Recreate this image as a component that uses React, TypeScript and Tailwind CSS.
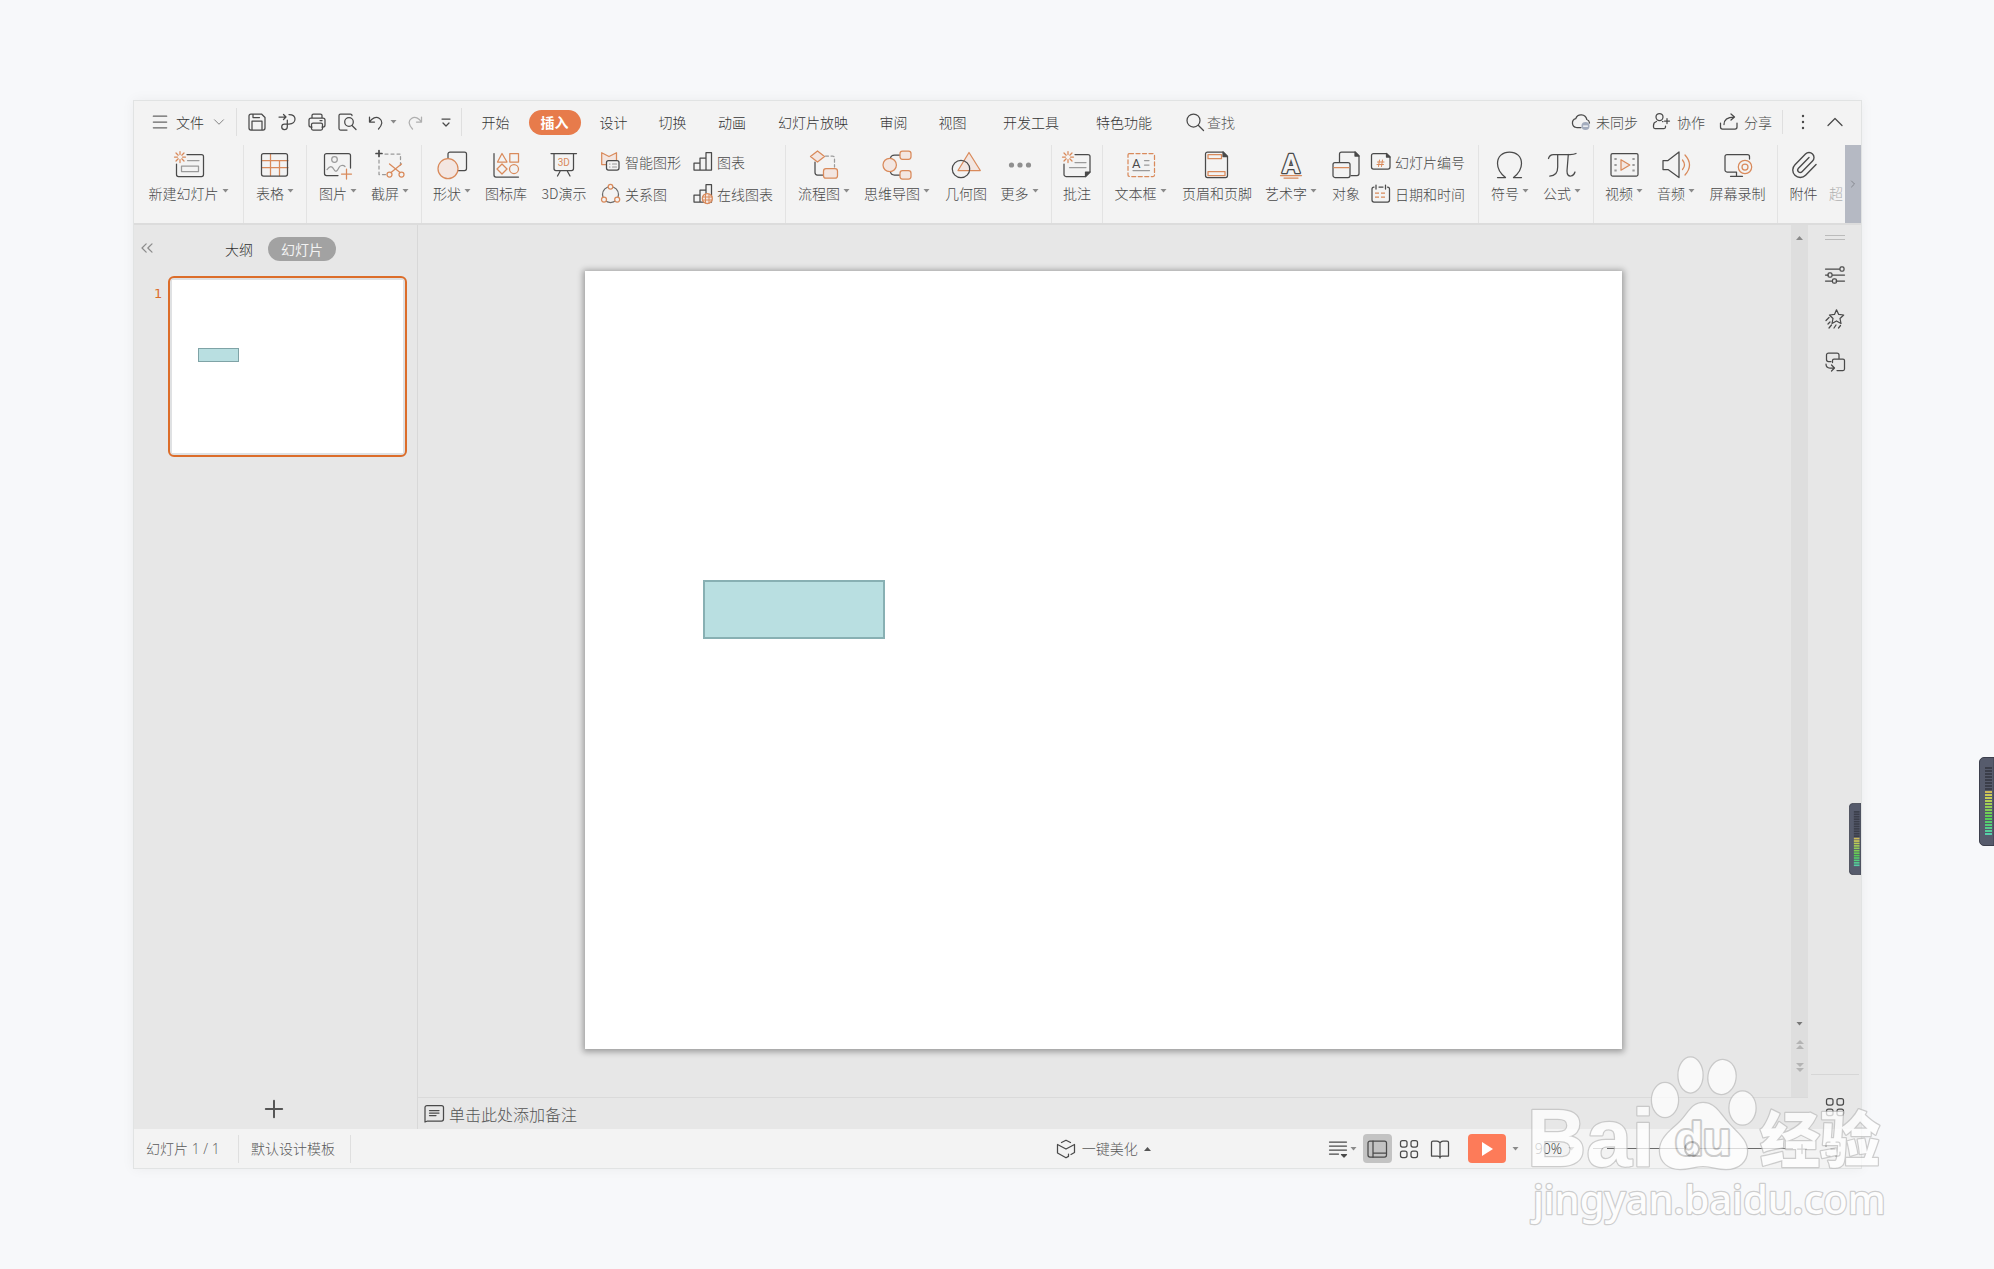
import type { ReactNode } from 'react'
import { ChevronDown, ChevronUp, ChevronsLeft, ChevronRight, Menu, Paperclip, Plus } from 'lucide-react'

const INK = '#4a4a4a'
const ORANGE = '#d98a5b'
const TINT = '#f3e6e1'
const GRAY = '#9a9a9a'

function Icon({ size = 30, children }: { size?: number; children: ReactNode }) {
  return (
    <svg
      width={size}
      height={size}
      viewBox={`0 0 ${size} ${size}`}
      fill="none"
      stroke={INK}
      strokeWidth="1.250"
      strokeLinecap="round"
      strokeLinejoin="round"
      className="shrink-0 overflow-visible"
      aria-hidden="true"
    >
      {children}
    </svg>
  )
}

function Spark() {
  return <path stroke={ORANGE} d="M6 1.5v3M6 9.5v3M.5 7h3M8.5 7h3M2 3l2.200 2.200M7.800 8.800L10 11M10 3L7.800 5.200M4.200 8.800L2 11" />
}

function Caret({ up = false, className = 'text-[#8a8a8a]' }: { up?: boolean; className?: string }) {
  return (
    <svg width="7" height="4" viewBox="0 0 7 4" className={`shrink-0 ${className}`} aria-hidden="true">
      <path fill="currentColor" d={up ? 'M0 4L3.500 0L7 4z' : 'M.5 0h6L3.500 3.500z'} />
    </svg>
  )
}

function Separator({ className = 'h-7' }: { className?: string }) {
  return <div className={`w-px shrink-0 bg-[#dfdfdf] ${className}`} />
}

const icons = {
  newSlide: (
    <Icon>
      <Spark />
      <path d="M13 4.500h14.500a2 2 0 0 1 2 2v18a2 2 0 0 1-2 2H4.500a2 2 0 0 1-2-2V14" />
      <path stroke={GRAY} d="M13.500 10.500H25M7.500 16h17v5.500h-17z" />
    </Icon>
  ),
  table: (
    <Icon>
      <path stroke={ORANGE} d="M2 10.500h26M2 17.500h26M10.500 4v21.500M19.500 10.500v15" />
      <rect x="1.500" y="3.500" width="26" height="22.500" rx="2" />
    </Icon>
  ),
  picture: (
    <Icon>
      <path d="M15 25.500H3.500a2 2 0 0 1-2-2v-18a2 2 0 0 1 2-2h22a2 2 0 0 1 2 2V18" />
      <circle cx="11.500" cy="9.500" r="2.800" stroke={GRAY} />
      <path stroke={GRAY} d="M4 19.500c3-4 5-4 7 0s4 0 5-2 4-3 6-1" />
      <path stroke={ORANGE} d="M23.500 19v10M18.500 24h10" />
    </Icon>
  ),
  capture: (
    <Icon>
      <path strokeWidth="1.700" d="M4 .5v6M1 3.500h6" />
      <path stroke={GRAY} strokeDasharray="3 3" d="M10 4h15.500v11M4 10v14.500h7" />
      <path stroke={ORANGE} d="M14.500 14l10.500 8.500M26.500 14L16 22.500" />
      <circle cx="14.500" cy="24.500" r="2.500" stroke={ORANGE} />
      <circle cx="26.500" cy="24.500" r="2.500" stroke={ORANGE} />
    </Icon>
  ),
  shape: (
    <Icon>
      <rect x="11" y="2" width="18.500" height="18.500" rx="2" />
      <circle cx="11" cy="18.700" r="10" stroke={ORANGE} fill={TINT} />
    </Icon>
  ),
  iconLibrary: (
    <Icon>
      <path d="M3 3.500V25a2 2 0 0 0 2 2h22.500" />
      <path stroke={ORANGE} d="M11 3.500l5 8.500H6.500zM18.800 3.500h8.700V12h-8.700zM11 14l5 5-5 5-5-5z" />
      <circle cx="23" cy="19" r="4.500" stroke={ORANGE} />
    </Icon>
  ),
  show3d: (
    <Icon>
      <path d="M2 3.500h25.500M5 3.500v15a2 2 0 0 0 2 2h15.500a2 2 0 0 0 2-2v-15M11 21.500l-2.500 4.500M18.500 21.500L21 26" />
      <text x="14.800" y="15.500" textAnchor="middle" fontSize="10" fontWeight="400" fill={ORANGE} stroke="none" fontFamily="Roboto, sans-serif">
        3D
      </text>
    </Icon>
  ),
  smartArt: (
    <Icon size={20}>
      <path stroke={ORANGE} fill={TINT} d="M5 12.500H.7V.7L8 4.500 15.500.7V8" />
      <rect x="5.500" y="8.500" width="12.500" height="9.500" rx="2" fill="#f3f3f3" />
      <path stroke={GRAY} strokeWidth="1.200" d="M8.500 12h.5M11.500 12h4M8.500 15h.5M11.500 15h4" />
    </Icon>
  ),
  relation: (
    <Icon size={20}>
      <circle cx="9.500" cy="10.500" r="8" stroke="#6a6a6a" />
      <g stroke={ORANGE} fill="#f3f3f3">
        <circle cx="9.500" cy="2.700" r="2.300" />
        <circle cx="3" cy="15.500" r="2.500" />
        <circle cx="16.200" cy="15.500" r="2.500" />
      </g>
    </Icon>
  ),
  chart: (
    <Icon size={20}>
      <path d="M1 11h6v7H1zM7 6h6v12H7zM13 .7h5.500V18H13z" />
    </Icon>
  ),
  onlineChart: (
    <Icon size={20}>
      <path d="M1 11h6v7H1zM7 6h6v12H7zM13 .7h5.500V18H13z" />
      <circle cx="14.300" cy="14.500" r="5" stroke={ORANGE} fill={TINT} />
      <path stroke={ORANGE} strokeWidth="1" d="M9.500 13h9.500M9.500 16h9.500M12.500 10v9M16 10v9" />
    </Icon>
  ),
  flow: (
    <Icon>
      <path d="M6 12v10.500A2.500 2.500 0 0 0 8.500 25H14" />
      <path stroke={GRAY} strokeDasharray="3 2.500" d="M16.500 6h7a2 2 0 0 1 2 2v9" />
      <path stroke={ORANGE} fill={TINT} d="M8.500 1l7 5.500-7 5.500-7-5.500z" />
      <rect x="14.500" y="18.700" width="14" height="9.500" rx="2.500" stroke={ORANGE} fill={TINT} />
    </Icon>
  ),
  mind: (
    <Icon>
      <path d="M18 5h-5.500Q9 5 8.500 8M18 25h-5.500Q9 25 8.500 22" />
      <g stroke={ORANGE} fill={TINT}>
        <circle cx="7.700" cy="15" r="6.700" />
        <rect x="18" y="1" width="11" height="8.300" rx="2.500" />
        <rect x="18" y="20.700" width="11" height="8.300" rx="2.500" />
      </g>
    </Icon>
  ),
  geometry: (
    <Icon>
      <path stroke={ORANGE} fill={TINT} d="M18 2.500l11.300 18H7z" />
      <circle cx="10" cy="19" r="8.700" />
    </Icon>
  ),
  more: (
    <Icon>
      <g fill="#8f8f8f" stroke="none">
        <circle cx="6.500" cy="15" r="2.600" />
        <circle cx="15" cy="15" r="2.600" />
        <circle cx="23.500" cy="15" r="2.600" />
      </g>
    </Icon>
  ),
  comment: (
    <Icon>
      <Spark />
      <path d="M13 4.500h13a2 2 0 0 1 2 2V22l-4.500 4.500H4a2 2 0 0 1-2-2V14" />
      <path fill={INK} d="M28 22h-4.500v4.500z" />
      <path stroke={GRAY} d="M13 12.500h11M7.500 17.500H24" />
    </Icon>
  ),
  textBox: (
    <Icon>
      <rect x="2" y="3.500" width="26.500" height="23" rx="1.500" stroke={ORANGE} strokeDasharray="4 2.500" />
      <text x="6" y="17.500" fontSize="13" fontWeight="400" fill={INK} stroke="none" fontFamily="Roboto, sans-serif">
        A
      </text>
      <path stroke={GRAY} d="M18.500 10.500H23M18.500 15H23M7 20.500h16.500" />
    </Icon>
  ),
  header: (
    <Icon>
      <path d="M21 2H5.500a2 2 0 0 0-2 2v21.500a2 2 0 0 0 2 2h18a2 2 0 0 0 2-2V6.500z" />
      <path fill={INK} d="M21 2v4.500h4.500z" />
      <path stroke={ORANGE} d="M6 4.700h13.500v4H6zM6 21.500h17v4H6z" />
    </Icon>
  ),
  wordArt: (
    <Icon>
      <text
        x="15"
        y="22.500"
        textAnchor="middle"
        fontSize="26"
        fontWeight="700"
        fill="#f3f3f3"
        strokeWidth="2.600"
        paintOrder="stroke"
        fontFamily="Roboto, sans-serif"
      >
        A
      </text>
      <path stroke={ORANGE} d="M4.500 25.500h21M8 28h14" />
    </Icon>
  ),
  object: (
    <Icon>
      <path d="M8.500 12V4a2 2 0 0 1 2-2H24l4 4v17.500a2 2 0 0 1-2 2h-6" />
      <path fill={INK} d="M24 2v4h4z" />
      <rect x="2" y="12.500" width="17" height="15" rx="2" fill="#f3f3f3" />
      <path stroke={ORANGE} d="M3 17.500h15" />
    </Icon>
  ),
  slideNumber: (
    <Icon size={20}>
      <path d="M15 1.500H2.500a2 2 0 0 0-2 2V15a2 2 0 0 0 2 2H17a2 2 0 0 0 2-2V5z" />
      <path fill={INK} d="M15.500 1.500V5H19z" />
      <path stroke={ORANGE} strokeWidth="1" d="M8.500 8l-1 6.500M11.500 8l-1 6.500M6.500 10h6.500M6 12.500h6.500" />
    </Icon>
  ),
  date: (
    <Icon size={20}>
      <path d="M3 3a2 2 0 0 0-2 2v11a2 2 0 0 0 2 2h13.500a2 2 0 0 0 2-2V5a2 2 0 0 0-2-2M5 1v4M14.500 1v4M8 3h4" />
      <path stroke={ORANGE} strokeDasharray="4 2" strokeLinecap="butt" d="M4 9h12M4 13h12" />
    </Icon>
  ),
  omega: (
    <Icon>
      <path d="M2.500 27.500H10.500C6 24 2.500 20 2.500 13.500 2.500 6.500 7.500 2 14.500 2s12 4.500 12 11.500c0 6.500-3.500 10.500-8 14h8" />
    </Icon>
  ),
  pi: (
    <Icon>
      <path d="M1.500 8.500q1-4 5-4H23q4 0 6-1M10.700 4.500V17q0 9-8 9M21.300 4.500L20 21q0 5.500 4 5 3-.5 4-4" />
    </Icon>
  ),
  video: (
    <Icon>
      <rect x="2" y="3.500" width="27" height="22.500" rx="1.500" />
      <path stroke={GRAY} strokeWidth="2.200" strokeLinecap="square" d="M6.500 9h.1M6.500 15h.1M6.500 20.500h.1M24.500 9h.1M24.500 15h.1M24.500 20.500h.1" />
      <path stroke={ORANGE} fill={TINT} d="M12 9.700v10.500l8.800-5.200z" />
    </Icon>
  ),
  audio: (
    <Icon>
      <path d="M2 10.500h5L18 2v25.500L7 19.500H2z" />
      <path stroke={ORANGE} d="M21.500 10q4 5 0 9.500M24 5q9 10 0 20" />
    </Icon>
  ),
  record: (
    <Icon>
      <path d="M13 22H4a2 2 0 0 1-2-2V6.500a2 2 0 0 1 2-2h20.500a2 2 0 0 1 2 2V9M13.500 22v4M7.500 26.300h12" />
      <g stroke={ORANGE}>
        <circle cx="22" cy="17" r="6.700" />
        <circle cx="22" cy="17" r="3" />
      </g>
    </Icon>
  ),
  clip: <Paperclip size={30} strokeWidth={1.1} color={INK} />,
}

type ToolProps = { icon: ReactNode; label: string; caret?: boolean; className: string }

function Tool({ icon, label, caret, className }: ToolProps) {
  return (
    <button className={`flex shrink-0 flex-col items-center pt-[5px] ${className}`}>
      {icon}
      <span className="mt-[3px] flex items-center gap-[3px] leading-5 whitespace-nowrap">
        {label}
        {caret && <Caret className="-mt-1 text-[#8a8a8a]" />}
      </span>
    </button>
  )
}

function SmallTool({ icon, label }: { icon: ReactNode; label: string }) {
  return (
    <button className="flex h-5 items-center gap-1 leading-5 whitespace-nowrap">
      {icon}
      {label}
    </button>
  )
}

function Group({ className = '', children }: { className?: string; children: ReactNode }) {
  return <div className={`flex shrink-0 border-r border-[#e3e3e3] ${className}`}>{children}</div>
}

const tabs = [
  { label: '开始', width: 'w-[59px]' },
  { label: '插入', width: 'w-[59px]', active: true },
  { label: '设计', width: 'w-[59px]' },
  { label: '切换', width: 'w-[59px]' },
  { label: '动画', width: 'w-[60px]' },
  { label: '幻灯片放映', width: 'w-[102px]' },
  { label: '审阅', width: 'w-[59px]' },
  { label: '视图', width: 'w-[59px]' },
  { label: '开发工具', width: 'w-[98px]' },
  { label: '特色功能', width: 'w-[88px]' },
]

function TitleBar() {
  return (
    <header className="flex h-11 items-center pb-0.5">
      <button className="flex items-center pl-4 leading-5">
        <Menu size={20} strokeWidth={1.5} className="mr-1.5 text-[#666]" />
        文件
        <ChevronDown size={18} strokeWidth={1.2} className="ml-1.5 text-[#777]" />
      </button>
      <Separator className="ml-2 h-7" />
      <div className="ml-[5px] flex items-center">
        <button aria-label="保存" className="flex w-[30px] justify-center">
          <Icon size={18}>
            <path d="M3 1h10.500L17 4.500V15a2 2 0 0 1-2 2H3a2 2 0 0 1-2-2V3a2 2 0 0 1 2-2zM4 17V8h10v9M5 1v3.500h6.500" />
          </Icon>
        </button>
        <button aria-label="输出" className="flex w-[30px] justify-center">
          <Icon size={18}>
            <path d="M1 4h7M5.500 1.500L8 4 5.500 6.500M11 1.500c4 0 6 2 6 4.500s-2 5-6 5H6.500a2.800 2.800 0 1 0 2.800 3V7" />
          </Icon>
        </button>
        <button aria-label="打印" className="flex w-[30px] justify-center">
          <Icon size={18}>
            <path d="M4 5V2.500A1.500 1.500 0 0 1 5.500 1h7A1.500 1.500 0 0 1 14 2.500V5M4 14H3a2 2 0 0 1-2-2V7a2 2 0 0 1 2-2h12a2 2 0 0 1 2 2v5a2 2 0 0 1-2 2h-1" />
            <rect x="3.500" y="10" width="11" height="7" rx="1.500" />
            <path d="M12 7.500h2" />
          </Icon>
        </button>
        <button aria-label="打印预览" className="flex w-[30px] justify-center">
          <Icon size={18}>
            <path d="M9 17H2.500A1.500 1.500 0 0 1 1 15.500v-13A1.500 1.500 0 0 1 2.500 1h10A1.500 1.500 0 0 1 14 2.500" />
            <circle cx="11" cy="9" r="4.300" />
            <path d="M14 12.500l4 4" />
          </Icon>
        </button>
        <button aria-label="撤销" className="flex w-7 justify-center">
          <Icon size={16}>
            <path d="M1.500 3v5h5M1.500 8C4 4 8 2 11.500 4.500s3 6-1 10.500" />
          </Icon>
        </button>
        <button aria-label="撤销列表" className="flex w-1.5 justify-center">
          <Caret />
        </button>
        <button aria-label="恢复" className="flex w-[38px] justify-center opacity-40">
          <Icon size={16}>
            <path d="M14.500 3v5h-5M14.500 8C12 4 8 2 4.500 4.500s-3 6 1 10.500" />
          </Icon>
        </button>
        <button aria-label="自定义快速访问工具栏" className="flex w-6 justify-center">
          <Icon size={10}>
            <path d="M1 2h8M2 6l3 3 3-3" />
          </Icon>
        </button>
      </div>
      <Separator className="ml-[3px] h-7" />
      <nav className="ml-1 flex items-center">
        {tabs.map((tab) => (
          <button key={tab.label} className={`flex justify-center ${tab.width}`}>
            {tab.active ? (
              <span className="rounded-full bg-[#e77b4b] px-3 leading-[25px] font-bold text-white">{tab.label}</span>
            ) : (
              tab.label
            )}
          </button>
        ))}
      </nav>
      <label className="ml-[17px] flex items-center gap-0.5">
        <Icon size={20}>
          <circle cx="8.500" cy="8.500" r="6.500" />
          <path d="M13.500 13.500l5 5" />
        </Icon>
        <input aria-label="查找" placeholder="查找" className="w-20 bg-transparent leading-5 outline-none placeholder:text-[#555]" />
      </label>

      <div className="ml-auto flex items-center text-[#4c4c4c]">
        <button className="flex items-center gap-[5px]">
          <Icon size={20}>
            <path d="M10 15.500H5.500a4.500 4.500 0 0 1-.8-8.800 5.800 5.800 0 0 1 11.100.8 4 4 0 0 1 2.700 3.500" />
            <circle cx="14.500" cy="14" r="4" fill="#a3acbd" stroke="none" />
            <path stroke="#fff" d="M12.500 14h4" />
          </Icon>
          未同步
        </button>
        <button className="ml-3.5 flex items-center gap-[5px]">
          <Icon size={20}>
            <circle cx="7.500" cy="5" r="3.500" />
            <path d="M4.500 9.500a4 4 0 0 0-3 4v1.500a1.500 1.500 0 0 0 1.500 1.500h9a1.500 1.500 0 0 0 1.500-1.500v-1M10.500 9.500h.5M15 6.500v5M12.500 9h5" />
          </Icon>
          协作
        </button>
        <button className="ml-3.5 flex items-center gap-[5px]">
          <Icon size={20}>
            <path d="M1.500 11v4a2 2 0 0 0 2 2H16a2 2 0 0 0 2-2v-4M5 12.500Q5 5 15 5M12 2l3.500 3L12 8" />
          </Icon>
          分享
        </button>
        <Separator className="ml-2.5 h-6" />
        <button aria-label="更多选项" className="ml-3 flex w-4 justify-center">
          <Icon size={16}>
            <path strokeWidth="2.400" d="M8 2v.1M8 8v.1M8 14v.1" />
          </Icon>
        </button>
        <button aria-label="隐藏功能区" className="mr-3 ml-2.5">
          <ChevronUp size={28} strokeWidth={1.1} />
        </button>
      </div>
    </header>
  )
}

function Ribbon() {
  return (
    <div className="flex h-20 overflow-hidden border-b-2 border-[#dcdcdc] text-[#484848]">
      <Group>
        <Tool icon={icons.newSlide} label="新建幻灯片" caret className="w-[109px]" />
      </Group>
      <Group>
        <Tool icon={icons.table} label="表格" caret className="w-[62px]" />
      </Group>
      <Group className="px-[5px]">
        <Tool icon={icons.picture} label="图片" caret className="w-[52px]" />
        <Tool icon={icons.capture} label="截屏" caret className="w-[52px]" />
      </Group>
      <Group className="pl-1">
        <Tool icon={icons.shape} label="形状" caret className="w-[52px]" />
        <Tool icon={icons.iconLibrary} label="图标库" className="w-14" />
        <Tool icon={icons.show3d} label="3D演示" className="w-[60px]" />
        <div className="ml-[7px] grid w-[184px] grid-cols-2 content-start gap-y-3 pt-[7px]">
          <SmallTool icon={icons.smartArt} label="智能图形" />
          <SmallTool icon={icons.chart} label="图表" />
          <SmallTool icon={icons.relation} label="关系图" />
          <SmallTool icon={icons.onlineChart} label="在线图表" />
        </div>
      </Group>
      <Group className="px-1.5">
        <Tool icon={icons.flow} label="流程图" caret className="w-16" />
        <Tool icon={icons.mind} label="思维导图" caret className="w-[82px]" />
        <Tool icon={icons.geometry} label="几何图" className="w-14" />
        <Tool icon={icons.more} label="更多" caret className="w-[51px]" />
      </Group>
      <Group>
        <Tool icon={icons.comment} label="批注" className="w-[50px]" />
      </Group>
      <Group className="pl-[5px]">
        <Tool icon={icons.textBox} label="文本框" caret className="w-[65px]" />
        <Tool icon={icons.header} label="页眉和页脚" className="w-[88px]" />
        <Tool icon={icons.wordArt} label="艺术字" caret className="w-[60px]" />
        <Tool icon={icons.object} label="对象" className="w-[50px]" />
        <div className="grid w-[107px] content-start gap-y-3 pt-[7px]">
          <SmallTool icon={icons.slideNumber} label="幻灯片编号" />
          <SmallTool icon={icons.date} label="日期和时间" />
        </div>
      </Group>
      <Group className="px-[5px]">
        <Tool icon={icons.omega} label="符号" caret className="w-[52px]" />
        <Tool icon={icons.pi} label="公式" caret className="w-[52px]" />
      </Group>
      <Group className="px-1">
        <Tool icon={icons.video} label="视频" caret className="w-[52px]" />
        <Tool icon={icons.audio} label="音频" caret className="w-[52px]" />
        <Tool icon={icons.record} label="屏幕录制" className="w-[71px]" />
      </Group>
      <div className="flex min-w-0 flex-1 overflow-hidden">
        <Tool icon={icons.clip} label="附件" className="w-[51px]" />
        <button className="flex shrink-0 items-start pt-[38px] leading-5 text-[#b0b0b0]">超</button>
      </div>
      <button aria-label="向右滚动" className="flex w-4 shrink-0 items-center justify-center bg-[#b5b9c3] text-[#85888f]">
        <ChevronRight size={12} strokeWidth={2} />
      </button>
    </div>
  )
}

function SlidePanel() {
  return (
    <aside className="flex w-[284px] shrink-0 flex-col border-r border-[#d8d8d8]">
      <div className="flex h-[50px] items-center pb-0.5">
        <button aria-label="收起" className="-mt-0.5 ml-[3px] w-[88px] text-[#8c8c8c]">
          <ChevronsLeft size={20} strokeWidth={1.5} />
        </button>
        <button>大纲</button>
        <button className="ml-[15px] rounded-full bg-[#a2a2a2] px-[13px] leading-6 font-normal text-[#f2f2f2]">幻灯片</button>
      </div>
      <div className="mt-px flex pl-5">
        <span className="w-3.5 pt-2 font-['DejaVu_Sans'] text-[13px] leading-5 font-normal text-[#dc6d2a]">1</span>
        <div className="w-[239px] rounded-md border-2 border-[#dc6d2a] bg-[#dfe1e3] p-0.5">
          <div className="relative aspect-[4/3] bg-white">
            <div className="absolute top-[39%] left-[11.400%] h-[8.500%] w-[17.600%] border border-[#7fa3a6] bg-[#b9dfe1]" />
          </div>
        </div>
      </div>
      <button aria-label="新建幻灯片" className="mt-auto mr-[3px] mb-1.5 self-center text-[#555]">
        <Plus size={28} strokeWidth={1.7} />
      </button>
    </aside>
  )
}

function DoubleArrow({ down = false }: { down?: boolean }) {
  return (
    <svg width="8" height="9" viewBox="0 0 8 9" fill="#b4b4b4" aria-hidden="true">
      <path d={down ? 'M0 0h8L4 4zM0 5h8L4 9z' : 'M0 4h8L4 0zM0 9h8L4 5z'} />
    </svg>
  )
}

function Editor() {
  return (
    <section className="flex min-w-0 flex-1 flex-col">
      <div className="flex flex-1">
        <div className="flex-1 pt-[46px] pr-[169px] pb-12 pl-[167px]">
          <div className="relative aspect-[4/3] bg-white shadow-[0_1px_6px_2px_rgba(0,0,0,0.32)]">
            <div className="absolute top-[39.700%] left-[11.400%] h-[7.600%] w-[17.500%] border-2 border-[#88b0b3] bg-[#b9dfe1]" />
          </div>
        </div>
        <div className="flex w-[17px] flex-col items-center bg-[#dedede] pt-[11px] pb-[25px]">
          <button aria-label="向上滚动">
            <Caret up />
          </button>
          <button aria-label="向下滚动" className="mt-auto">
            <Caret className="text-[#777]" />
          </button>
          <button aria-label="上一张" className="mt-3.5">
            <DoubleArrow />
          </button>
          <button aria-label="下一张" className="mt-3.5">
            <DoubleArrow down />
          </button>
        </div>
      </div>
      <label className="flex h-8 items-center border-t border-[#dadada] pt-0.5 pl-1.5 text-base">
        <Icon size={20}>
          <path d="M1 18V3.500A2 2 0 0 1 3 1.500h14.500a2 2 0 0 1 2 2V15a2 2 0 0 1-2 2H3.500zM5.500 6.500h9.500M5.500 9h9.500M5.500 11.500H12" />
        </Icon>
        <input
          aria-label="备注"
          placeholder="单击此处添加备注"
          className="ml-[5px] flex-1 bg-transparent leading-6 outline-none placeholder:text-[#555]"
        />
      </label>
    </section>
  )
}

function SideStrip() {
  return (
    <aside className="flex w-[53px] shrink-0 flex-col items-center pt-2.5">
      <div className="h-[5px] w-5 border-y border-[#bbb]" />
      <button aria-label="属性" className="mt-[25px]">
        <Icon size={20}>
          <path d="M.5 4h14M.5 10h3M7.500 10h12M.5 16H7M11 16h8.500" />
          <rect x="15" y="1.800" width="4" height="4.400" rx="1.500" />
          <rect x="3" y="7.800" width="4" height="4.400" rx="1.500" />
          <rect x="7.500" y="13.800" width="4" height="4.400" rx="1.500" />
        </Icon>
      </button>
      <button aria-label="动画窗格" className="mt-6">
        <Icon size={20}>
          <path d="M11.500.8l2.200 4.600 5 .6-3.700 3.500 1 5-4.500-2.500L7 14.500l1-5L4.500 6l5-.6zM4 8.500l-3 3M5 13l-2 2M6.500 16l-2.500 3M11 16l-2 3M15.500 16.500L13.500 19" />
        </Icon>
      </button>
      <button aria-label="切换窗格" className="mt-[23px]">
        <Icon size={20}>
          <path d="M6 9.500H3.500a2 2 0 0 1-2-2V3a2 2 0 0 1 2-2H12a2 2 0 0 1 2 2v3.500M1 12q0 4 4 4h4M6.500 13l3 3-3 3" />
          <path d="M7.500 10.500V8.500a1.500 1.500 0 0 1 1.500-1.500h9a1.500 1.500 0 0 1 1.500 1.500v8.500a1.500 1.500 0 0 1-1.500 1.500h-6" />
        </Icon>
      </button>
      <div className="mt-auto h-px w-12 bg-[#d6d6d6]" />
      <button aria-label="工具箱" className="mt-[22px] mb-3">
        <GridIcon />
      </button>
    </aside>
  )
}

function GridIcon() {
  return (
    <Icon size={20}>
      <rect x="1.500" y="1.500" width="6.500" height="6.500" rx="2" />
      <rect x="12" y="1.500" width="6.500" height="6.500" rx="2" />
      <rect x="1.500" y="12" width="6.500" height="6.500" rx="2" />
      <rect x="12" y="12" width="6.500" height="6.500" rx="2" />
    </Icon>
  )
}

function StatusBar() {
  return (
    <footer className="flex h-[39px] items-center pt-px font-['Open_Sans','Noto_Sans_CJK_SC',sans-serif] text-[#5a5a5a]">
      <span className="w-[104px] pl-3">幻灯片 1 / 1</span>
      <Separator />
      <span className="w-[111px] pl-3">默认设计模板</span>
      <Separator />

      <button className="ml-auto flex items-center gap-1.5">
        <Icon size={20}>
          <path d="M5.500 3.500L10 1.200l4.500 2.300M1.500 5.500L10 10l8.500-4.500v8L15 15.500M1.500 5.500v8.500l8.500 4.800 2.500-1.400V15" />
        </Icon>
        一键美化
        <Caret up className="text-[#555]" />
      </button>

      <div className="ml-[177px] flex shrink-0 items-center">
        <button aria-label="备注视图" className="flex items-center gap-0.5">
          <Icon size={20}>
            <path d="M1.500 3h17M1.500 7h17M1.500 11h17M1.500 15h9" />
            <path fill={INK} d="M13.500 15.500h5L16 18z" />
          </Icon>
          <Caret />
        </button>
        <button aria-label="普通视图" className="ml-1.5 flex h-[29px] w-[29px] items-center justify-center rounded bg-[#c3c3c3]">
          <Icon size={20}>
            <rect x="1" y="2" width="18.500" height="16" rx="2" />
            <path d="M6 2v16M6 14h13" />
          </Icon>
        </button>
        <button aria-label="幻灯片浏览" className="ml-[7px]">
          <GridIcon />
        </button>
        <button aria-label="阅读视图" className="ml-[11px]">
          <Icon size={20}>
            <path d="M10 4v15M10 4q-1-2-3-2H3a1.500 1.500 0 0 0-1.500 1.500V17H8q1.500 0 2 1.500.5-1.500 2-1.500h6.500V3.500A1.500 1.500 0 0 0 17 2h-4q-2 0-3 2z" />
          </Icon>
        </button>
        <button aria-label="播放" className="ml-[18px] flex h-[29px] w-[38px] items-center justify-center rounded bg-[#fd7b59]">
          <svg width="12" height="14" viewBox="0 0 12 14" fill="#fff" aria-hidden="true">
            <path d="M1 0l11 7L1 14z" />
          </svg>
        </button>
        <button aria-label="播放选项" className="ml-1.5">
          <Caret />
        </button>
        <button className="ml-4 flex items-center gap-1.5 text-[#333]">
          90%
          <Caret />
        </button>
        <button aria-label="缩小" className="ml-[18px] h-px w-2.5 bg-[#777]" />
        <input
          type="range"
          aria-label="缩放"
          min="0"
          max="100"
          defaultValue="45"
          className="mx-1 h-4 w-[186px] appearance-none bg-[linear-gradient(#6a6a6a,#6a6a6a)] bg-[length:100%_1px] bg-center bg-no-repeat [&::-webkit-slider-thumb]:h-4 [&::-webkit-slider-thumb]:w-4 [&::-webkit-slider-thumb]:appearance-none [&::-webkit-slider-thumb]:rounded-full [&::-webkit-slider-thumb]:border-2 [&::-webkit-slider-thumb]:border-[#111] [&::-webkit-slider-thumb]:bg-[#f3f3f3]"
        />
        <button aria-label="放大">
          <Icon size={10}>
            <path d="M5 .5v9M.5 5h9" />
          </Icon>
        </button>
        <button aria-label="适应窗口" className="mr-5 ml-[18px]">
          <Icon size={16}>
            <path d="M1 5V3a2 2 0 0 1 2-2h2M11 1h2a2 2 0 0 1 2 2v2M15 11v2a2 2 0 0 1-2 2h-2M5 15H3a2 2 0 0 1-2-2v-2M6 8h4" />
          </Icon>
        </button>
      </div>
    </footer>
  )
}

function LevelMeter({ lit, className }: { lit: number; className: string }) {
  const total = 23
  return (
    <svg viewBox="0 0 15 89" preserveAspectRatio="xMinYMin slice" className={className} aria-hidden="true">
      <path d="M15 .5H5A4.500 4.500 0 0 0 .5 5v79A4.500 4.500 0 0 0 5 88.500h10z" fill="#565b6c" stroke="#3c3f4c" />
      {Array.from({ length: total }, (_, i) => {
        const n = i - (total - lit)
        const hue = 50 + (n / lit) * 120
        return <rect key={i} x="6" y={10 + i * 3} width="7" height="2" fill={n < 0 ? '#3b3e4a' : `hsl(${hue} 55% 57%)`} />
      })}
    </svg>
  )
}

function Watermark() {
  return (
    <svg
      viewBox="0 0 365 179"
      className="pointer-events-none absolute right-[104px] bottom-10 h-[179px] w-[365px] opacity-75"
      fill="#fff"
      stroke="#bfbfbf"
      strokeWidth="2.500"
      strokeLinejoin="round"
      paintOrder="stroke"
    >
      <text x="2" y="116" fontSize="82" fontWeight="700" fontFamily="'Liberation Sans', sans-serif">
        Bai
      </text>
      <ellipse cx="140" cy="50" rx="13" ry="17" />
      <ellipse cx="165.500" cy="25" rx="12" ry="17.500" />
      <ellipse cx="197" cy="27" rx="13.500" ry="17" transform="rotate(8 197 27)" />
      <ellipse cx="217.500" cy="58" rx="13" ry="16.500" />
      <path d="M178 53C166 53 163 65 153 74S135 89 135 101C135 112 144 119 155 119C164 119 170 116 178 116S192 119 201 119C214 119 222 111 222 101C222 90 213 84 204 74S190 53 178 53z" />
      <text x="178" y="105" textAnchor="middle" fontSize="46" fontWeight="700" strokeWidth="4" fontFamily="'Liberation Sans', sans-serif">
        du
      </text>
      <text x="235" y="112" fontSize="60" fontWeight="900" fontFamily="'Noto Sans CJK SC', sans-serif">
        经验
      </text>
      <text x="8" y="164" fontSize="40" fontWeight="500" fontFamily="'Noto Sans', sans-serif">
        jingyan.baidu.com
      </text>
    </svg>
  )
}

export default function App() {
  return (
    <main className="relative min-h-screen overflow-hidden bg-[#f7f8fa] pt-[100px] pr-[132px] pb-[100px] pl-[133px] font-['Noto_Sans_CJK_SC',sans-serif] text-sm font-light text-[#333]">
      <div className="border border-[#e1e3e3] bg-[#f3f3f3] shadow-[0_0_12px_rgba(0,0,0,0.05)]">
        <TitleBar />
        <Ribbon />
        <div className="flex bg-[#e7e7e7]">
          <SlidePanel />
          <Editor />
          <SideStrip />
        </div>
        <StatusBar />
      </div>
      <LevelMeter lit={12} className="absolute top-[803px] right-[133px] h-[72px] w-3" />
      <LevelMeter lit={15} className="absolute top-[757px] right-0 h-[89px] w-[15px]" />
      <Watermark />
    </main>
  )
}
